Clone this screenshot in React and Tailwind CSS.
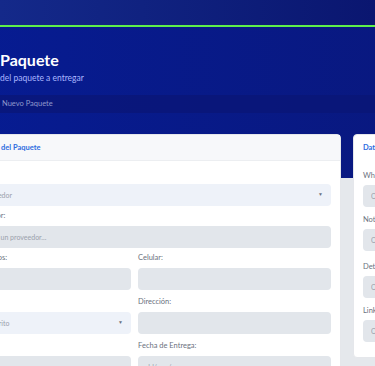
import React from 'react';

const Label = ({ children, tight }) => (
  <label className={`block text-[7.5px] leading-[12px] text-[#6b7280] whitespace-nowrap ${tight ? 'mb-[3px]' : 'mb-[4px]'}`}>{children}</label>
);

const Input = ({ placeholder, pad = 'px-[8px]' }) => (
  <input
    placeholder={placeholder}
    className={`block w-full h-[22px] rounded-[4px] bg-[#e2e6eb] ${pad} text-[7px] text-[#6b7280] placeholder-[#9aa1ab] outline-none`}
  />
);

const Select = ({ text }) => (
  <div className="flex items-center justify-between w-full h-[22px] rounded-[4px] bg-[#eef2f9] px-[8px] text-[7px] text-[#9aa1ab]">
    <span className="whitespace-nowrap">{text}</span>
    <span className="text-[5px] text-[#6b7280]">▼</span>
  </div>
);

const App = () => {
  return (
    <div className="w-[375px] h-[366px] overflow-hidden bg-[#e5e8ec] font-['Lato',sans-serif]">
      <div className="h-[25px] bg-gradient-to-r from-[#14298a] to-[#0a1670]" />
      <div className="h-[2px] bg-[#5ef04a]" />
      <div className="-ml-[72px] w-[720px]">
        <div className="h-[151px] bg-gradient-to-r from-[#061c94] to-[#0a1675]">
          <div className="pl-[10px] pt-[21px] whitespace-nowrap">
            <h1 className="text-[16px] leading-[24px] font-bold text-white">
              <span className="inline-block w-[62px]">Nuevo</span>Paquete
            </h1>
            <p className="text-[8.5px] leading-[13px] text-[#a9b6ff]">
              <span className="inline-block w-[62px]">Información</span>del paquete a entregar
            </p>
          </div>
          <div className="mt-[10px] h-[18px] bg-[#0a1675]/70 flex items-center pl-[10px]">
            <span className="text-[7.5px] text-[#8e97cc] whitespace-nowrap">
              <span className="inline-block w-[64px]">Paquetes /</span>Nuevo Paquete
            </span>
          </div>
        </div>
        <div className="-mt-[44px] flex gap-[12px] items-start">
          <div className="w-[413px] bg-white rounded-[4px] border border-[#e5e7eb]">
            <div className="h-[26px] bg-[#f7f8fa] border-b border-[#eceef1] flex items-center pl-[10px]">
              <span className="text-[7.5px] font-bold text-[#2d6cdf] whitespace-nowrap">
                <span className="inline-block w-[62px]">Datos</span>del Paquete
              </span>
            </div>
            <div className="px-[9px] pt-[7px]">
              <Label>Proveedor:</Label>
              <Select text="Seleccione proveedor" />
              <div className="mt-[4px]">
                <Label>Buscar el proveedor:</Label>
                <Input placeholder="Escriba para elegir un proveedor..." pad="pl-[5px] pr-[8px]" />
              </div>
              <div className="mt-[4px] grid grid-cols-2 gap-x-[7px] gap-y-[6px]">
                <div>
                  <Label>Nombres y Apellidos:</Label>
                  <Input />
                </div>
                <div>
                  <Label>Celular:</Label>
                  <Input />
                </div>
                <div>
                  <Label>Distrito:</Label>
                  <Select text="Seleccione el distrito" />
                </div>
                <div>
                  <Label>Dirección:</Label>
                  <Input />
                </div>
                <div>
                  <Label>Costo de envío:</Label>
                  <Input />
                </div>
                <div>
                  <Label>Fecha de Entrega:</Label>
                  <Input placeholder="dd/mm/aaaa" />
                </div>
              </div>
            </div>
          </div>
          <div className="w-[240px] bg-white rounded-[4px] border border-[#e5e7eb] pb-[15px]">
            <div className="h-[26px] flex items-center pl-[9px]">
              <span className="text-[7.5px] font-bold text-[#2d6cdf] whitespace-nowrap">Datos Adicionales</span>
            </div>
            <div className="px-[9px] pt-[9px] flex flex-col gap-[7px]">
              <div>
                <Label tight>WhatsApp:</Label>
                <Input placeholder="Opcional" />
              </div>
              <div>
                <Label tight>Notas:</Label>
                <Input placeholder="Opcional" />
              </div>
              <div className="mt-[3px]">
                <Label tight>Detalle:</Label>
                <Input placeholder="Opcional" />
              </div>
              <div>
                <Label tight>Link de ubicación:</Label>
                <Input placeholder="Opcional" />
              </div>
            </div>
          </div>
        </div>
      </div>
    </div>
  );
};

export default App;
